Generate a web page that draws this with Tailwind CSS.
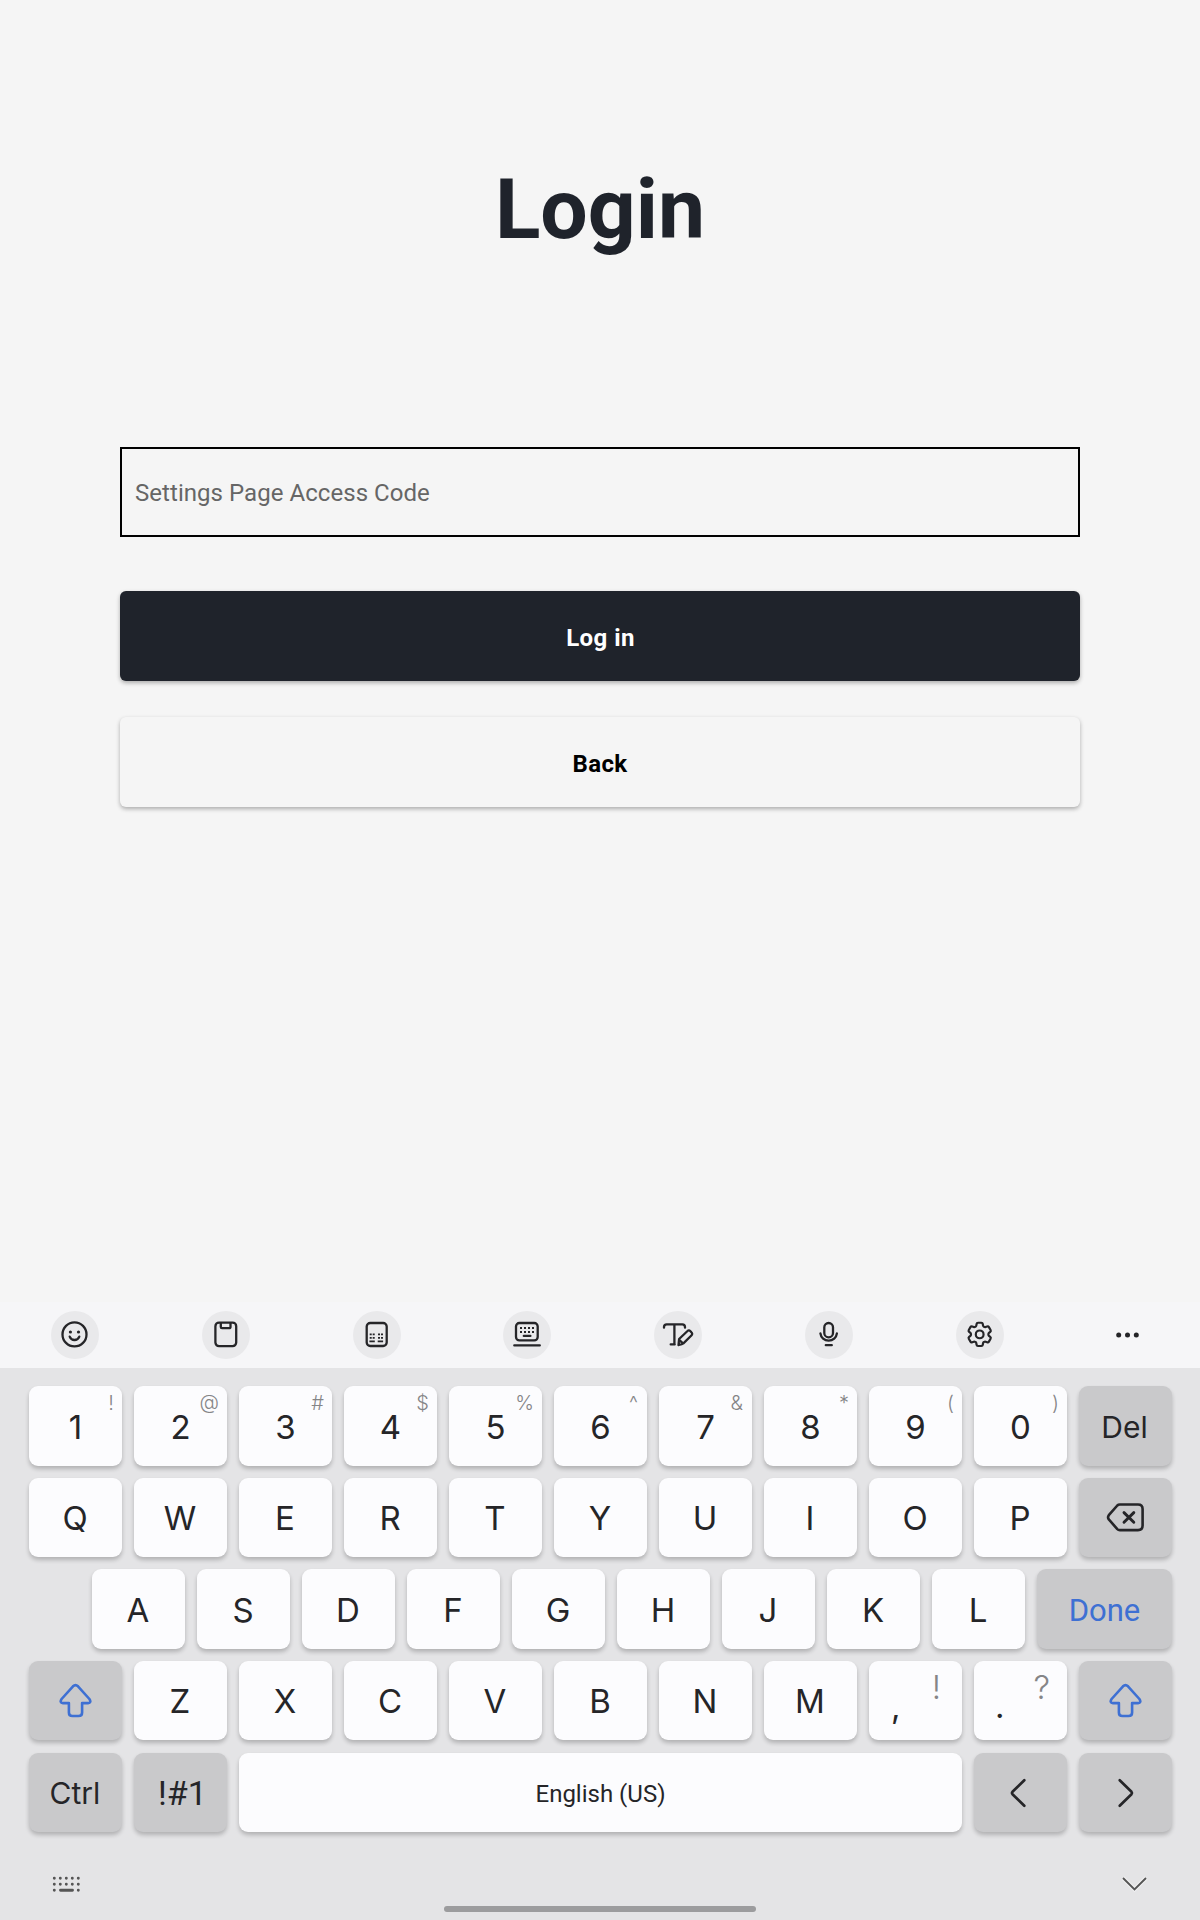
<!DOCTYPE html>
<html lang="en">
<head>
<meta charset="utf-8">
<title>Login</title>
<script src="https://cdn.jsdelivr.net/npm/@tailwindcss/browser@4"></script>
</head>
<body class="bg-[#f5f5f5] font-['Roboto',sans-serif]">
<div class="flex h-[1920px] w-[1200px] flex-col overflow-hidden">

  <main class="flex h-[1302px] flex-col px-[120px] pt-[161px]">
    <h1 class="h-[98px] text-center text-[84px] leading-[98px] font-bold text-[#1f232b]">Login</h1>
    <div class="mt-[188px] flex h-[90px] shrink-0 items-center border-2 border-black px-[13px] pt-0.5 text-2xl tracking-[0.05px] text-[#666]">Settings Page Access Code</div>
    <button class="mt-[54px] flex h-[90px] shrink-0 items-center justify-center rounded-md bg-[#1f232b] pt-1 pl-px text-2xl font-bold tracking-[0.45px] text-white shadow-[0_2px_4px_rgba(0,0,0,0.3)]">Log in</button>
    <button class="mt-9 flex h-[90px] shrink-0 items-center justify-center rounded-md bg-[#f5f5f5] pt-1 text-2xl font-bold tracking-[0.4px] text-black shadow-[0_2px_4px_rgba(0,0,0,0.3)]">Back</button>
  </main>

  <!-- Keyboard toolbar -->
  <div class="flex h-[66px] shrink-0 items-center bg-[#f6f6f8] pl-[51px] text-[#252528]">
    <div class="flex w-[953px] justify-between *:size-12 *:rounded-full *:bg-[#e9e9eb]">
      <svg viewBox="0 0 48 48" fill="none" stroke="currentColor" stroke-width="2.3" stroke-linecap="round"><circle cx="23.5" cy="23.4" r="12"/><path d="M18.7 25.6a5.1 5.1 0 0 0 9.6 0"/><g fill="currentColor" stroke="none"><circle cx="19.4" cy="21" r="1.6"/><circle cx="27.5" cy="21" r="1.6"/></g></svg>
      <svg viewBox="0 0 48 48" fill="none" stroke="currentColor" stroke-width="2.3" stroke-linejoin="round"><rect x="13.4" y="11.6" width="20.8" height="23.6" rx="3.6"/><path d="M18.8 12v4a1.2 1.2 0 0 0 1.2 1.2h7.300a1.200 1.200 0 0 0 1.200-1.200v-4"/></svg>
      <svg viewBox="0 0 48 48" fill="none" stroke="currentColor" stroke-width="2.3"><rect x="13.700" y="12" width="20" height="23" rx="3.6"/><path stroke-width="1.900" d="M16.700 23.400h2m1 0h2m3.300 0h2m1 0h2M16.700 26.900h2m1 0h2m3.300 0h2m1 0h2M16.400 30.400h5.400m2.900 0h5.400"/></svg>
      <svg viewBox="0 0 48 48" fill="none" stroke="currentColor" stroke-width="2.3"><rect x="13" y="12" width="21.700" height="17.400" rx="3.4"/><path stroke-width="2" d="M17 17h2m2 0h2m2 0h2m2 0h2M17 20.900h2m2 0h2m2 0h2m2 0h2"/><path stroke-linecap="round" d="M20.800 24.900h6.600M11.300 34.400h25.500"/></svg>
      <svg viewBox="0 0 48 48" fill="none" stroke="currentColor" stroke-width="2.300" stroke-linecap="round" stroke-linejoin="round"><path d="M10 16.700v-.6c0-1.800.9-2.800 2.700-2.800h15.600c1.800 0 2.700 1 2.700 2.800v.6M20.400 13.600v19.800M16.700 33.400h4"/><path d="m24.500 34 .6-6 8.400-8a1.900 1.900 0 0 1 2.700 0l1.400 1.500a1.900 1.900 0 0 1 0 2.700l-8.200 8.200c-1.500 1.100-3.200 1.300-4.900 1.600ZM25.400 29l3.500 3.400"/></svg>
      <svg viewBox="0 0 48 48" fill="none" stroke="currentColor" stroke-width="2.300" stroke-linecap="round"><rect x="19.300" y="12" width="8.700" height="14.300" rx="4.350"/><path d="M15.400 22.300a8.300 8.300 0 0 0 16.500 0M20.800 34.200h6"/></svg>
      <svg viewBox="0 0 48 48" fill="none" stroke="currentColor" stroke-width="1.700" stroke-linejoin="round"><g transform="translate(8.200 7.900) scale(1.290)"><path d="M9.594 3.940c.09-.542.56-.94 1.110-.94h2.593c.55 0 1.020.398 1.110.94l.213 1.281c.063.374.313.686.645.87.074.04.147.083.22.127.325.196.72.257 1.075.124l1.217-.456a1.125 1.125 0 0 1 1.370.49l1.296 2.247a1.125 1.125 0 0 1-.26 1.431l-1.003.827c-.293.241-.438.613-.43.992a7.723 7.723 0 0 1 0 .255c-.008.378.137.75.43.991l1.004.827c.424.35.534.955.26 1.430l-1.298 2.247a1.125 1.125 0 0 1-1.369.491l-1.217-.456c-.355-.133-.75-.072-1.076.124a6.470 6.470 0 0 1-.22.128c-.331.183-.581.495-.644.869l-.213 1.281c-.09.543-.56.94-1.110.94h-2.594c-.55 0-1.019-.398-1.110-.94l-.213-1.281c-.062-.374-.312-.686-.644-.87a6.520 6.520 0 0 1-.22-.127c-.325-.196-.72-.257-1.076-.124l-1.217.456a1.125 1.125 0 0 1-1.369-.49l-1.297-2.247a1.125 1.125 0 0 1 .26-1.431l1.004-.827c.292-.24.437-.613.43-.991a6.932 6.932 0 0 1 0-.255c.007-.38-.138-.751-.43-.992l-1.004-.827a1.125 1.125 0 0 1-.26-1.430l1.297-2.247a1.125 1.125 0 0 1 1.370-.491l1.216.456c.356.133.751.072 1.076-.124.072-.044.146-.086.22-.128.332-.183.582-.495.644-.869l.214-1.280Z"/><circle cx="12" cy="12" r="3"/></g></svg>
    </div>
    <svg class="ml-[99px] size-12" viewBox="0 0 48 48" fill="currentColor"><circle cx="15.700" cy="24" r="2.500"/><circle cx="24.500" cy="24" r="2.500"/><circle cx="33.300" cy="24" r="2.500"/></svg>
  </div>

  <!-- Keyboard -->
  <div class="flex h-[552px] shrink-0 flex-col bg-[#e4e4e6] pt-[18px] pl-[29px] font-['Inter','Roboto',sans-serif] text-[33px] leading-10 text-[#252528]">
    <div class="flex h-20 gap-3 *:relative *:flex *:w-[93px] *:items-center *:justify-center *:rounded-[9px] *:bg-[#fcfcfe] *:pt-0.5 *:shadow-[0_3px_4px_rgba(0,0,0,0.22)]">
      <div>1<span class="absolute top-[5px] right-2 text-xl leading-6 font-light text-[#858587]">!</span></div>
      <div>2<span class="absolute top-1 right-2 text-xl leading-6 font-light text-[#858587]">@</span></div>
      <div>3<span class="absolute top-[5px] right-2 text-xl leading-6 font-light text-[#858587]">#</span></div>
      <div>4<span class="absolute top-[5px] right-2 text-xl leading-6 font-light text-[#858587]">$</span></div>
      <div>5<span class="absolute top-[5px] right-2 text-xl leading-6 font-light text-[#858587]">%</span></div>
      <div>6<span class="absolute top-[5px] right-[9px] text-xl leading-6 font-light text-[#858587]">^</span></div>
      <div>7<span class="absolute top-[5px] right-[9px] text-xl leading-6 font-light text-[#858587]">&amp;</span></div>
      <div>8<span class="absolute top-[5px] right-2 text-xl leading-6 font-light text-[#858587]">*</span></div>
      <div>9<span class="absolute top-[5px] right-2 text-xl leading-6 font-light text-[#858587]">(</span></div>
      <div>0<span class="absolute top-[5px] right-2 text-xl leading-6 font-light text-[#858587]">)</span></div>
      <div class="bg-[#c9c9cb]! pt-px! pr-0.5 text-[30px]">Del</div>
    </div>
    <div class="mt-3 flex h-[79px] gap-3 *:flex *:w-[93px] *:items-center *:justify-center *:rounded-[9px] *:bg-[#fcfcfe] *:pt-px *:pr-px *:shadow-[0_3px_4px_rgba(0,0,0,0.22)]">
      <div>Q</div><div>W</div><div>E</div><div>R</div><div>T</div><div>Y</div><div>U</div><div>I</div><div>O</div><div>P</div>
      <div class="bg-[#c9c9cb]! pt-0! pr-0!"><svg class="h-[35px] w-[51px]" viewBox="0 0 51 35" fill="none" stroke="currentColor" stroke-width="2.600" stroke-linecap="round" stroke-linejoin="round"><path d="M19.800 4.500h18.200q4.600 0 4.600 4.600v16.400q0 4.600-4.600 4.600H19.800q-1.500 0-2.500-1L8.800 19.400q-1.500-2.100 0-4.200l8.500-9.700q1-1 2.500-1Z"/><path stroke-width="2.900" d="m24 12.600 9.800 9.700m0-9.700L24 22.300"/></svg></div>
    </div>
    <div class="mt-3 ml-[63px] flex h-20 gap-3 *:flex *:w-[93px] *:items-center *:justify-center *:rounded-[9px] *:bg-[#fcfcfe] *:pt-0.5 *:pr-px *:shadow-[0_3px_4px_rgba(0,0,0,0.22)]">
      <div>A</div><div>S</div><div>D</div><div>F</div><div>G</div><div>H</div><div>J</div><div>K</div><div>L</div>
      <div class="w-[135px]! bg-[#c9c9cb]! pt-1! pr-0! font-['Roboto',sans-serif] text-[31px] text-[#3e70d3]">Done</div>
    </div>
    <div class="mt-3 flex h-[79px] gap-3 *:relative *:flex *:w-[93px] *:items-center *:justify-center *:rounded-[9px] *:bg-[#fcfcfe] *:pt-px *:pr-px *:shadow-[0_3px_4px_rgba(0,0,0,0.22)]">
      <div class="bg-[#c9c9cb]! pt-0! pr-0!"><svg class="h-9 w-[33px] text-[#3e70d3]" viewBox="0 0 33 36" fill="none" stroke="currentColor" stroke-width="2.600" stroke-linejoin="round"><path d="M14 3.300q2.500-2.400 5 0L30.400 16q2.400 3.800-1.400 4.100h-5.900v9.300q0 3.600-3.600 3.600h-6q-3.600 0-3.600-3.600v-9.300H4q-3.800-.3-1.400-4.100Z"/></svg></div>
      <div>Z</div><div>X</div><div>C</div><div>V</div><div>B</div><div>N</div><div>M</div>
      <div><span class="absolute top-[25px] left-[22px]">,</span><span class="absolute top-[6px] right-[21px] font-light text-[#858587]">!</span></div>
      <div><span class="absolute top-[25px] left-[21px]">.</span><span class="absolute top-[6px] right-[17px] font-light text-[#858587]">?</span></div>
      <div class="bg-[#c9c9cb]! pt-0! pr-0!"><svg class="h-9 w-[33px] text-[#3e70d3]" viewBox="0 0 33 36" fill="none" stroke="currentColor" stroke-width="2.600" stroke-linejoin="round"><path d="M14 3.300q2.500-2.400 5 0L30.400 16q2.400 3.800-1.400 4.100h-5.900v9.300q0 3.600-3.600 3.600h-6q-3.600 0-3.600-3.600v-9.300H4q-3.800-.3-1.400-4.100Z"/></svg></div>
    </div>
    <div class="mt-[13px] flex h-[79px] gap-3 *:flex *:w-[93px] *:items-center *:justify-center *:rounded-[9px] *:bg-[#c9c9cb] *:pt-0.5 *:shadow-[0_3px_4px_rgba(0,0,0,0.22)]">
      <div class="pt-px! pr-px text-[30px]">Ctrl</div>
      <div class="pt-0! pl-1 font-['Roboto',sans-serif] text-[34px]">!#1</div>
      <div class="w-[723px]! bg-[#fcfcfe]! font-['Roboto',sans-serif] text-2xl">English (US)</div>
      <div class="pt-0! pr-1.5"><svg class="h-8 w-5" viewBox="0 0 20 32" fill="none" stroke="currentColor" stroke-width="2.700" stroke-linecap="round" stroke-linejoin="round"><path d="M16.300 3.200 4.500 14.800q-1 1.200 0 2.400l11.800 11.600"/></svg></div>
      <div class="pt-0! pl-px"><svg class="h-8 w-5" viewBox="0 0 20 32" fill="none" stroke="currentColor" stroke-width="2.700" stroke-linecap="round" stroke-linejoin="round"><path d="m3.700 3.200 11.800 11.600q1 1.200 0 2.400L3.700 28.800"/></svg></div>
    </div>

    <div class="mt-[41px] flex justify-between pr-[50px] pl-[22px]">
      <svg class="h-6 w-8" viewBox="0 0 32 24" fill="none" stroke="#555" stroke-width="2.900" stroke-linecap="round"><path d="M3.300 5.300h.01M9.300 5.300h.01M15.300 5.300h.01M21.300 5.300h.01M27.300 5.300h.01M3.300 11.300h.01M9.300 11.300h.01M15.300 11.300h.01M21.300 11.300h.01M27.300 11.300h.01M3.300 17.300h.01M9.500 17.300h12M27.300 17.300h.01"/></svg>
      <svg class="h-6 w-8" viewBox="0 0 32 24" fill="none"><path d="m5 5 11.500 11.500L28 5" stroke="#f1f1f2" stroke-width="4"/><path d="m5 5 11.500 11.500L28 5" stroke="#555" stroke-width="1.900"/></svg>
    </div>
    <div class="mt-[9px] ml-[415px] h-1.5 w-[312px] rounded-full bg-[#9c9c9e]"></div>
  </div>
</div>
</body>
</html>
